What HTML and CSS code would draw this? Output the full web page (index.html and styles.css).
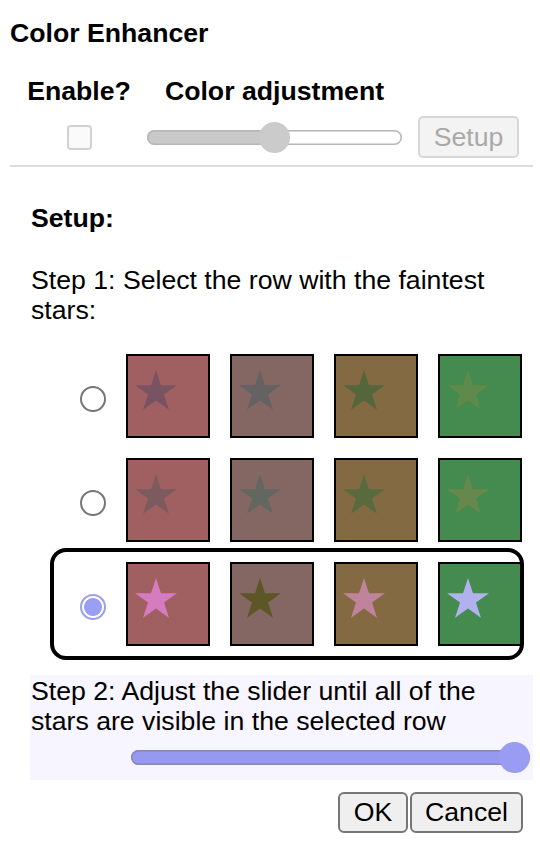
FILE: index.html
```html
<!DOCTYPE html>
<html lang="en">
<head>
<meta charset="utf-8">
<title>Color Enhancer</title>
<link rel="stylesheet" href="styles.css">
</head>
<body>
<svg class="defs" width="0" height="0" aria-hidden="true">
  <defs>
    <polygon id="star" points="0,-22 4.94,-6.8 20.92,-6.8 7.99,2.6 12.93,17.8 0,8.4 -12.93,17.8 -7.99,2.6 -20.92,-6.8 -4.94,-6.8"/>
  </defs>
</svg>

<h1 class="title">Color Enhancer</h1>

<div class="controls">
  <div class="hd">Enable?</div>
  <div class="hd">Color adjustment</div>
  <div></div>
  <input type="checkbox" class="chk" disabled>
  <input type="range" class="adj" min="0" max="100" value="50" disabled>
  <button class="setup-btn" disabled>Setup</button>
</div>

<div class="divider"></div>

<div class="setup">
  <div class="setup-title">Setup:</div>
  <p class="step">Step 1: Select the row with the faintest stars:</p>

  <div class="rows">
    <div class="row">
      <input type="radio" name="row" class="radio">
      <div class="sq c1"><svg class="star r1c1" viewBox="0 0 80 80"><use href="#star" x="28" y="36"/></svg></div>
      <div class="sq c2"><svg class="star r1c2" viewBox="0 0 80 80"><use href="#star" x="28" y="36"/></svg></div>
      <div class="sq c3"><svg class="star r1c3" viewBox="0 0 80 80"><use href="#star" x="28" y="36"/></svg></div>
      <div class="sq c4"><svg class="star r1c4" viewBox="0 0 80 80"><use href="#star" x="28" y="36"/></svg></div>
    </div>
    <div class="row">
      <input type="radio" name="row" class="radio">
      <div class="sq c1"><svg class="star r2c1" viewBox="0 0 80 80"><use href="#star" x="28" y="36"/></svg></div>
      <div class="sq c2"><svg class="star r2c2" viewBox="0 0 80 80"><use href="#star" x="28" y="36"/></svg></div>
      <div class="sq c3"><svg class="star r2c3" viewBox="0 0 80 80"><use href="#star" x="28" y="36"/></svg></div>
      <div class="sq c4"><svg class="star r2c4" viewBox="0 0 80 80"><use href="#star" x="28" y="36"/></svg></div>
    </div>
    <div class="row selected">
      <input type="radio" name="row" class="radio" checked>
      <div class="sq c1"><svg class="star r3c1" viewBox="0 0 80 80"><use href="#star" x="28" y="36"/></svg></div>
      <div class="sq c2"><svg class="star r3c2" viewBox="0 0 80 80"><use href="#star" x="28" y="36"/></svg></div>
      <div class="sq c3"><svg class="star r3c3" viewBox="0 0 80 80"><use href="#star" x="28" y="36"/></svg></div>
      <div class="sq c4"><svg class="star r3c4" viewBox="0 0 80 80"><use href="#star" x="28" y="36"/></svg></div>
    </div>
  </div>
</div>

<div class="step2">
  <p class="step">Step 2: Adjust the slider until all of the stars are visible in the selected row</p>
  <input type="range" class="tune" min="0" max="100" value="100">
</div>

<div class="actions">
  <button class="btn ok">OK</button>
  <button class="btn cancel">Cancel</button>
</div>
</body>
</html>
```

FILE: styles.css
```css
* { box-sizing: border-box; }

html, body {
  margin: 0;
  padding: 0;
  background: #fff;
}

body {
  font-family: "Liberation Sans", Arial, Helvetica, sans-serif;
  font-size: 26.67px;
  color: #000;
}

.defs {
  position: absolute;
  width: 0;
  height: 0;
  overflow: hidden;
}

.title {
  margin: 18px 0 0 10px;
  font-size: 26.67px;
  line-height: 30px;
  font-weight: bold;
}

/* top controls */
.controls {
  display: grid;
  grid-template-columns: 104px 255px 101px;
  column-gap: 16px;
  row-gap: 10px;
  padding-left: 27px;
  margin-top: 28px;
  align-items: center;
}

.hd {
  font-weight: bold;
  line-height: 30px;
  text-align: center;
  white-space: nowrap;
  justify-self: center;
}

.chk {
  -webkit-appearance: none;
  appearance: none;
  justify-self: center;
  width: 25px;
  height: 25px;
  margin: 0;
  border: 2px solid #d2d2d2;
  border-radius: 4px;
  background: #fafafa;
}

input[type="range"] {
  -webkit-appearance: none;
  appearance: none;
  margin: 0;
  padding: 0;
  height: 31px;
  background: transparent;
}

input[type="range"]::-webkit-slider-runnable-track {
  height: 15px;
  border-radius: 8px;
}

input[type="range"]::-webkit-slider-thumb {
  -webkit-appearance: none;
  appearance: none;
  width: 31px;
  height: 31px;
  margin-top: -8px;
  border-radius: 50%;
  border: none;
}

.adj {
  width: 255px;
}

.adj::-webkit-slider-runnable-track {
  background: linear-gradient(to right, #c9c9c9 0 50%, #fff 50% 100%);
  box-shadow: inset 0 0 0 1.5px #b6b6b6;
}

.adj::-webkit-slider-thumb {
  background: #cbcbcb;
}

.setup-btn {
  width: 101px;
  height: 42px;
  margin: 0;
  padding: 0;
  font-family: inherit;
  font-size: 26.67px;
  color: #a9a9a9;
  background: #f3f3f3;
  border: 2px solid #d7d7d7;
  border-radius: 5px;
}

.divider {
  height: 2px;
  margin: 7px 7px 0 10px;
  background: #dcdcdc;
}

/* setup */
.setup {
  padding: 0 7px 0 31px;
}

.setup-title {
  margin-top: 36px;
  font-weight: bold;
  line-height: 30px;
}

.step {
  margin: 0;
  line-height: 30px;
}

.setup .step {
  margin-top: 32px;
}

.rows {
  margin-top: 19px;
  margin-left: 23px;
  display: flex;
  flex-direction: column;
}

.row {
  display: flex;
  align-items: center;
  gap: 20px;
  width: 466px;
  height: 104px;
  padding-left: 26px;
  border-radius: 12px;
}

.row.selected {
  outline: 4px solid #000;
  outline-offset: 0;
}

.radio {
  -webkit-appearance: none;
  appearance: none;
  flex: none;
  width: 26px;
  height: 26px;
  margin: 6px 0 0 0;
  border: 2px solid #767676;
  border-radius: 50%;
  background: #fff;
}

.radio:checked {
  border-color: #9b9ef5;
  background: radial-gradient(circle, #9b9ef5 0 8.5px, #fff 9.3px);
}

.sq {
  flex: none;
  width: 84px;
  height: 84px;
  border: 2px solid #000;
}

.star {
  display: block;
  width: 80px;
  height: 80px;
}

.c1 { background: #a06061; }
.c2 { background: #846662; }
.c3 { background: #846a42; }
.c4 { background: #458a4e; }

.r1c1 { fill: #7a5363; }
.r1c2 { fill: #646262; }
.r1c3 { fill: #55663c; }
.r1c4 { fill: #608a4c; }

.r2c1 { fill: #7b5b5d; }
.r2c2 { fill: #636760; }
.r2c3 { fill: #596b3e; }
.r2c4 { fill: #66884c; }

.r3c1 { fill: #d67bbf; }
.r3c2 { fill: #5d5626; }
.r3c3 { fill: #c0839c; }
.r3c4 { fill: #b0b1ee; }

/* step 2 */
.step2 {
  margin: 19px 7px 0 30px;
  padding: 1px 0 7px 1px;
  background: #f7f5ff;
  display: flex;
  flex-direction: column;
}

.tune {
  width: 399px;
  margin-left: 100px !important;
  margin-top: 6px !important;
}

.tune::-webkit-slider-runnable-track {
  background: #9699ef;
  box-shadow: inset 0 0 0 1.5px #8688bd;
}

.tune::-webkit-slider-thumb {
  background: #9a9cf4;
}

/* buttons */
.actions {
  display: flex;
  justify-content: flex-end;
  gap: 2px;
  margin: 12px 17px 0 0;
}

.btn {
  height: 41px;
  margin: 0;
  padding: 0;
  font-family: inherit;
  font-size: 26.67px;
  color: #000;
  background: #efefef;
  border: 2px solid #767676;
  border-radius: 6px;
}

.ok { width: 70px; }
.cancel { width: 113px; }
```
